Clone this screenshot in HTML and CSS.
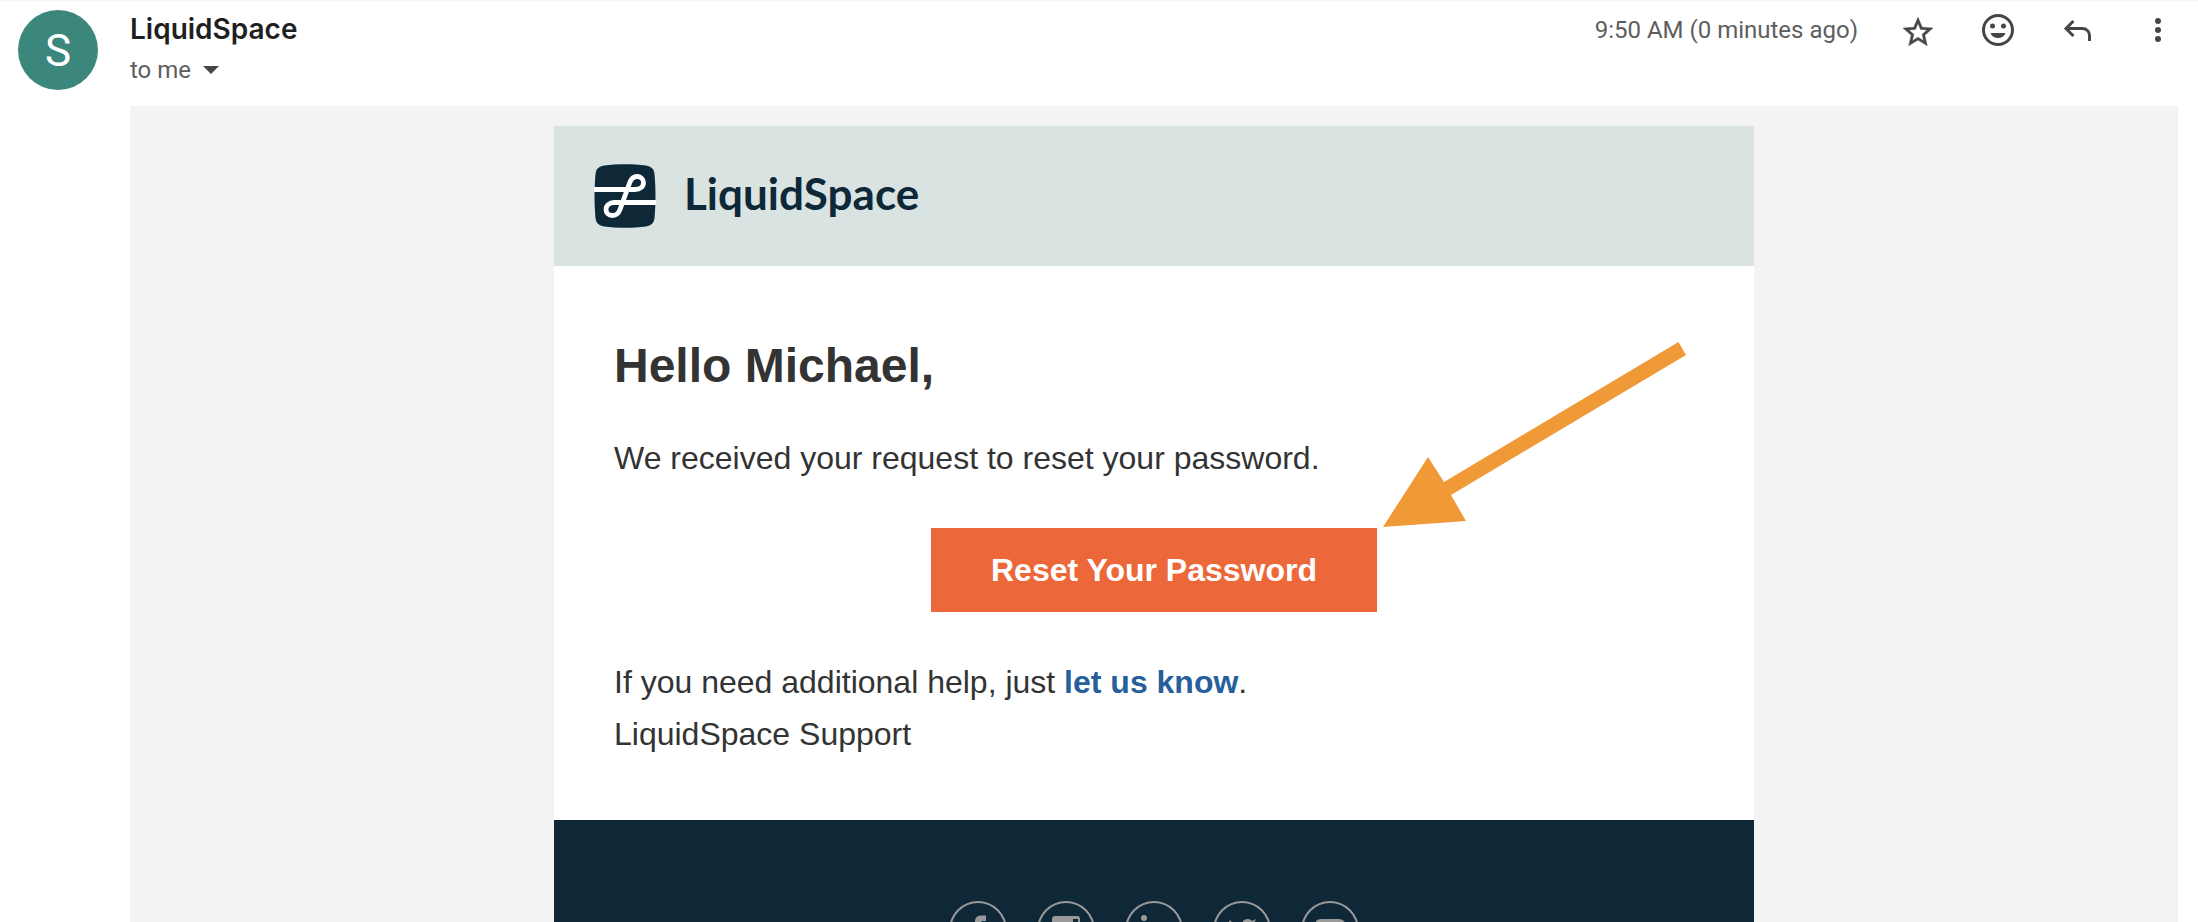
FILE: index.html
```html
<!DOCTYPE html>
<html lang="en">
<head>
  <meta charset="UTF-8">
  <meta name="viewport" content="width=device-width, initial-scale=1.0">
  <title>Reset Your Password</title>
  <link rel="stylesheet" href="styles.css">
</head>
<body>
  <header class="mail-header">
    <div class="avatar">S</div>
    <div class="sender">
      <div class="sender-name">LiquidSpace</div>
      <div class="sender-to">to me
        <button class="details-btn" aria-label="Show details">
          <svg width="16" height="8" viewBox="0 0 16 8"><path d="M0 0h16L8 8z" fill="#444746"/></svg>
        </button>
      </div>
    </div>
    <div class="mail-time">9:50 AM (0 minutes ago)</div>
    <div class="mail-actions">
      <button class="icon-btn" aria-label="Star">
        <svg width="40" height="40" viewBox="-1.33 -2.8 26.67 26.67"><path d="M22 9.24l-7.19-.62L12 2 9.19 8.63 2 9.24l5.46 4.73L5.82 21 12 17.27 18.18 21l-1.63-7.03L22 9.24zM12 15.4l-3.76 2.27 1-4.28-3.32-2.88 4.38-.38L12 6.1l1.71 4.04 4.38.38-3.32 2.88 1 4.28L12 15.4z" fill="#444746" stroke="#444746" stroke-width=".3"/></svg>
      </button>
      <button class="icon-btn" aria-label="Add reaction">
        <svg width="40" height="40" viewBox="0 0 40 40" fill="#444746"><circle cx="20" cy="20" r="14.5" fill="none" stroke="#444746" stroke-width="3"/><circle cx="14.5" cy="16" r="2.5"/><circle cx="25.500" cy="16" r="2.5"/><path d="M12.500 23h15c-1.200 3.500-4 5-7.500 5s-6.300-1.500-7.500-5z"/></svg>
      </button>
      <button class="icon-btn" aria-label="Reply">
        <svg width="40" height="40" viewBox="0 0 40 40" fill="none" stroke="#444746" stroke-width="3"><path d="M15.500 11L8 18.500l7.500 7.500M8 18.500h16.500a7 7 0 0 1 7 7V31"/></svg>
      </button>
      <button class="icon-btn" aria-label="More">
        <svg width="40" height="40" viewBox="0 0 40 40" fill="#444746"><circle cx="20" cy="11" r="3"/><circle cx="20" cy="20" r="3"/><circle cx="20" cy="29" r="3"/></svg>
      </button>
    </div>
  </header>

  <main class="mail-body">
    <div class="card">
      <div class="brand">
        <svg width="62" height="64" viewBox="0 0 62 64">
          <path d="M10 1.500C23-.2 39-.2 52 1.500c5 .8 8 3.500 8.500 8.500 1.300 14 1.300 30 0 44-.5 5-3.500 7.700-8.500 8.500-13 1.700-29 1.700-42 0-5-.8-8-3.500-8.500-8.500C.2 40 .2 24 1.500 10 2 5 5 2.300 10 1.500z" fill="#0e2838"/>
          <path d="M0 25.500h41c5.500 0 8.500-3 8.500-7 0-3.500-3-6-6.500-6s-5.500 2-7 5.500L26 45.500c-1.500 4-4 6-7.500 6-4 0-6.500-2.500-6.500-6 0-4 3.500-7 8-7h42" fill="none" stroke="#fff" stroke-width="4.800"/>
        </svg>
        <span class="brand-name">LiquidSpace</span>
      </div>
      <div class="content">
        <h1>Hello Michael,</h1>
        <p>We received your request to reset your password.</p>
        <div class="action">
          <a class="reset-btn" href="#">Reset Your Password</a>
          <svg class="arrow" width="304" height="186" viewBox="0 0 304 186"><path d="M0 185L45 115l16 25L295.500 0l7.500 13L68 153l15 26z" fill="#f09937"/></svg>
        </div>
        <p>If you need additional help, just <a class="help-link" href="#">let us know</a>.<br>LiquidSpace Support</p>
      </div>
      <footer class="card-footer">
        <a class="social" href="#" aria-label="Facebook">
          <svg width="58" height="58" viewBox="0 0 58 58" fill="#999"><path d="M26 44V30h-4v-6h4v-3c0-4.500 2.500-6.500 6-6.500h5V20h-3c-1.500 0-2 .6-2 2v2h5l-1 6h-4v14z"/></svg>
        </a>
        <a class="social" href="#" aria-label="Instagram">
          <svg width="58" height="58" viewBox="0 0 58 58" fill="#999" fill-rule="evenodd"><path d="M18 15h22a3 3 0 0 1 3 3v22a3 3 0 0 1-3 3H18a3 3 0 0 1-3-3V18a3 3 0 0 1 3-3zm18 3v5h5v-5zM29 23a6 6 0 1 0 0 12 6 6 0 0 0 0-12z"/></svg>
        </a>
        <a class="social" href="#" aria-label="LinkedIn">
          <svg width="58" height="58" viewBox="0 0 58 58" fill="#999"><circle cx="19" cy="17" r="3"/><path d="M16 23h6v19h-6zM26 23h6v3c3-5 11-4 11 4v12h-6V31c0-4-5-4-5 0v11h-6z"/></svg>
        </a>
        <a class="social" href="#" aria-label="Twitter">
          <svg width="58" height="58" viewBox="0 0 58 58" fill="#999"><path d="M17 19c3 4 7 6 12 6-1-4 2-7 6-7 2 0 3 1 4 2l4-2-2 4 3-1-3 4c0 16-16 20-26 14 3 0 6-1 8-3-3 0-5-2-6-4h3c-3-1-5-3-5-6h3c-3-2-3-5-1-7z"/></svg>
        </a>
        <a class="social" href="#" aria-label="YouTube">
          <svg width="58" height="58" viewBox="0 0 58 58" fill="#999" fill-rule="evenodd"><path d="M21 18h16c5 0 7 2 7 6v10c0 4-2 6-7 6H21c-5 0-7-2-7-6V24c0-4 2-6 7-6zm5 6v10l8-5z"/></svg>
        </a>
      </footer>
    </div>
  </main>
</body>
</html>
```
FILE: styles.css
```css
* {
  box-sizing: border-box;
}
html {
  height: 100%;
}
body {
  display: flex;
  flex-direction: column;
  height: 100%;
  margin: 0;
  overflow: hidden;
  background: #fff;
  font-family: "Liberation Sans", Arial, sans-serif;
  color: #333;
}
.mail-header {
  display: flex;
  align-items: flex-start;
  flex-shrink: 0;
  height: 106px;
  padding: 9px 20px 0 18px;
  border-top: 1px solid #f6f6f6;
  font-family: Roboto, sans-serif;
  font-size: 24px;
  color: #5e5e5e;
}
.avatar {
  width: 80px;
  height: 80px;
  border-radius: 50%;
  background: #3c877b;
  color: #fff;
  font-size: 44px;
  line-height: 82px;
  text-align: center;
}
.sender {
  flex: 1;
  margin-left: 32px;
}
.sender-name {
  font-family: Inter, sans-serif;
  font-size: 28px;
  font-weight: 600;
  line-height: 38px;
  color: #1f1f1f;
}
.sender-to {
  display: flex;
  align-items: center;
  gap: 12px;
  line-height: 44px;
}
.details-btn,
.icon-btn {
  display: flex;
  padding: 0;
  border: 0;
  background: none;
}
.mail-time {
  line-height: 40px;
}
.mail-actions {
  display: flex;
  gap: 40px;
  margin-left: 40px;
}
.mail-body {
  flex: 1;
  min-height: 0;
  overflow: hidden;
  margin: 0 20px 0 130px;
  padding: 20px;
  background: #f3f3f3;
}
.card {
  max-width: 1200px;
  margin: 0 auto;
  background: #fff;
}
.brand {
  display: flex;
  align-items: center;
  gap: 28px;
  height: 140px;
  padding: 0 40px;
  background: #d9e3e1;
}
.brand-name {
  padding-bottom: 6px;
  font-family: Lato, sans-serif;
  font-size: 44px;
  font-weight: 700;
  color: #0e2838;
}
.content {
  padding: 72px 60px 60px;
  font-size: 32px;
  line-height: 52px;
}
h1 {
  margin: 0 0 38px;
  font-size: 48px;
  line-height: 56px;
}
p {
  margin: 0;
}
.action {
  position: relative;
  width: fit-content;
  margin: 44px auto;
}
.reset-btn {
  display: block;
  padding: 16px 60px;
  background: #ec683a;
  color: #fff;
  font-weight: 700;
  text-decoration: none;
}
/* points at the top right corner of the button */
.arrow {
  position: absolute;
  right: -310px;
  bottom: 84px;
}
.help-link {
  color: #265f9b;
  font-weight: 700;
  text-decoration: none;
}
.card-footer {
  display: flex;
  justify-content: center;
  gap: 30px;
  padding: 81px 60px;
  background: #0e2838;
}
.social {
  display: flex;
  width: 58px;
  height: 58px;
  border-radius: 50%;
  box-shadow: inset 0 0 0 2px #999;
}
```
